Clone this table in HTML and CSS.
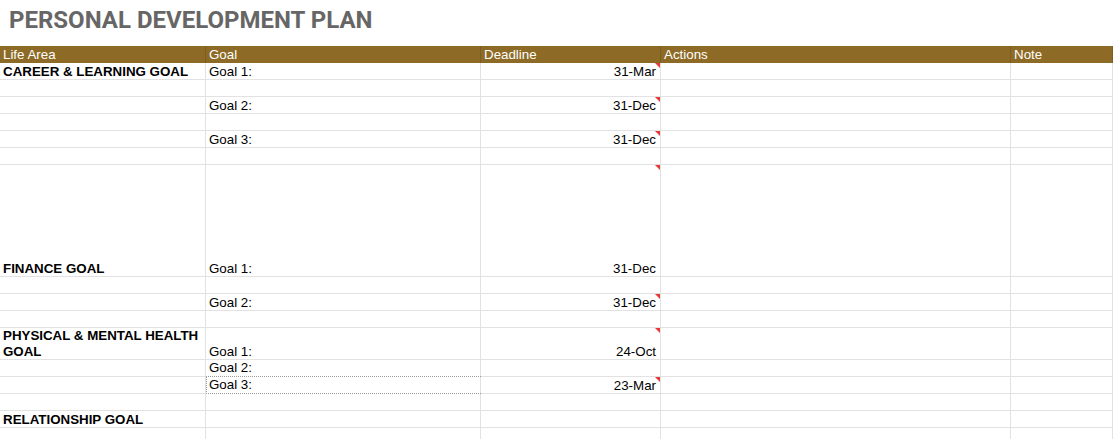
FILE: index.html
```html
<!DOCTYPE html>
<html>
<head>
<meta charset="utf-8">
<title>Personal Development Plan</title>
<link rel="stylesheet" href="styles.css">
</head>
<body>
<div class="title-bar"><h1 class="title">PERSONAL DEVELOPMENT PLAN</h1></div>
<div class="sheet">
  <div class="row head">
    <div class="cell">Life Area</div>
    <div class="cell">Goal</div>
    <div class="cell">Deadline</div>
    <div class="cell">Actions</div>
    <div class="cell">Note</div>
  </div>
  <div class="row">
    <div class="cell area">CAREER &amp; LEARNING GOAL</div>
    <div class="cell">Goal 1:</div>
    <div class="cell date flag">31-Mar</div>
    <div class="cell"></div><div class="cell"></div>
  </div>
  <div class="row">
    <div class="cell"></div><div class="cell"></div><div class="cell"></div><div class="cell"></div><div class="cell"></div>
  </div>
  <div class="row">
    <div class="cell"></div>
    <div class="cell">Goal 2:</div>
    <div class="cell date flag">31-Dec</div>
    <div class="cell"></div><div class="cell"></div>
  </div>
  <div class="row">
    <div class="cell"></div><div class="cell"></div><div class="cell"></div><div class="cell"></div><div class="cell"></div>
  </div>
  <div class="row">
    <div class="cell"></div>
    <div class="cell">Goal 3:</div>
    <div class="cell date flag">31-Dec</div>
    <div class="cell"></div><div class="cell"></div>
  </div>
  <div class="row">
    <div class="cell"></div><div class="cell"></div><div class="cell"></div><div class="cell"></div><div class="cell"></div>
  </div>
  <div class="row tall">
    <div class="cell area">FINANCE GOAL</div>
    <div class="cell">Goal 1:</div>
    <div class="cell date flag">31-Dec</div>
    <div class="cell"></div><div class="cell"></div>
  </div>
  <div class="row">
    <div class="cell"></div><div class="cell"></div><div class="cell"></div><div class="cell"></div><div class="cell"></div>
  </div>
  <div class="row">
    <div class="cell"></div>
    <div class="cell">Goal 2:</div>
    <div class="cell date flag">31-Dec</div>
    <div class="cell"></div><div class="cell"></div>
  </div>
  <div class="row">
    <div class="cell"></div><div class="cell"></div><div class="cell"></div><div class="cell"></div><div class="cell"></div>
  </div>
  <div class="row double">
    <div class="cell area">PHYSICAL &amp; MENTAL HEALTH GOAL</div>
    <div class="cell">Goal 1:</div>
    <div class="cell date flag">24-Oct</div>
    <div class="cell"></div><div class="cell"></div>
  </div>
  <div class="row">
    <div class="cell"></div>
    <div class="cell dotted">Goal 2:</div>
    <div class="cell"></div><div class="cell"></div><div class="cell"></div>
  </div>
  <div class="row">
    <div class="cell"></div>
    <div class="cell dotted dotted-left">Goal 3:</div>
    <div class="cell date flag">23-Mar</div>
    <div class="cell"></div><div class="cell"></div>
  </div>
  <div class="row">
    <div class="cell"></div><div class="cell"></div><div class="cell"></div><div class="cell"></div><div class="cell"></div>
  </div>
  <div class="row">
    <div class="cell area">RELATIONSHIP GOAL</div>
    <div class="cell"></div><div class="cell"></div><div class="cell"></div><div class="cell"></div>
  </div>
  <div class="row">
    <div class="cell"></div><div class="cell"></div><div class="cell"></div><div class="cell"></div><div class="cell"></div>
  </div>
</div>
</body>
</html>
```
FILE: styles.css
```css
html, body {
  margin: 0;
  padding: 0;
  background: #ffffff;
}
body {
  width: 1113px;
  overflow: hidden;
  font-family: "Liberation Sans", Arial, sans-serif;
  font-size: 13.33px;
  color: #000;
}
.title-bar {
  height: 46px;
  box-sizing: border-box;
  padding: 5px 0 0 9px;
}
.title {
  margin: 0;
  font-family: Roboto, "Liberation Sans", sans-serif;
  font-weight: 700;
  font-size: 24px;
  line-height: 30px;
  color: #666666;
  letter-spacing: 0;
}
.sheet {
  display: flex;
  flex-direction: column;
}
.row {
  display: grid;
  grid-template-columns: 206px 275px 180px 350px 102px;
  height: 17px;
}
.row.tall { height: 112px; }
.row.double { height: 32px; }
.cell {
  position: relative;
  display: flex;
  align-items: flex-end;
  padding: 0 3px;
  line-height: 16px;
  white-space: nowrap;
  overflow: hidden;
  box-shadow: inset -1px -1px 0 #e2e2e2;
}
.head .cell {
  background: #8d6b26;
  color: #ffffff;
  box-shadow: inset -1px 0 0 #7d5e20;
}
.area {
  font-weight: 700;
  white-space: normal;
}
.date {
  justify-content: flex-end;
  padding-right: 5px;
  overflow: visible;
}
.flag::after {
  content: "";
  position: absolute;
  top: 0;
  right: 1px;
  width: 0;
  height: 0;
  border-top: 5px solid #e53935;
  border-left: 5px solid transparent;
}
.dotted {
  box-shadow: inset -1px 0 0 #e2e2e2;
  border-bottom: 1px dotted #9a9a9a;
}
.dotted-left {
  border-left: 1px dotted #9a9a9a;
  padding-left: 2px;
}
```
